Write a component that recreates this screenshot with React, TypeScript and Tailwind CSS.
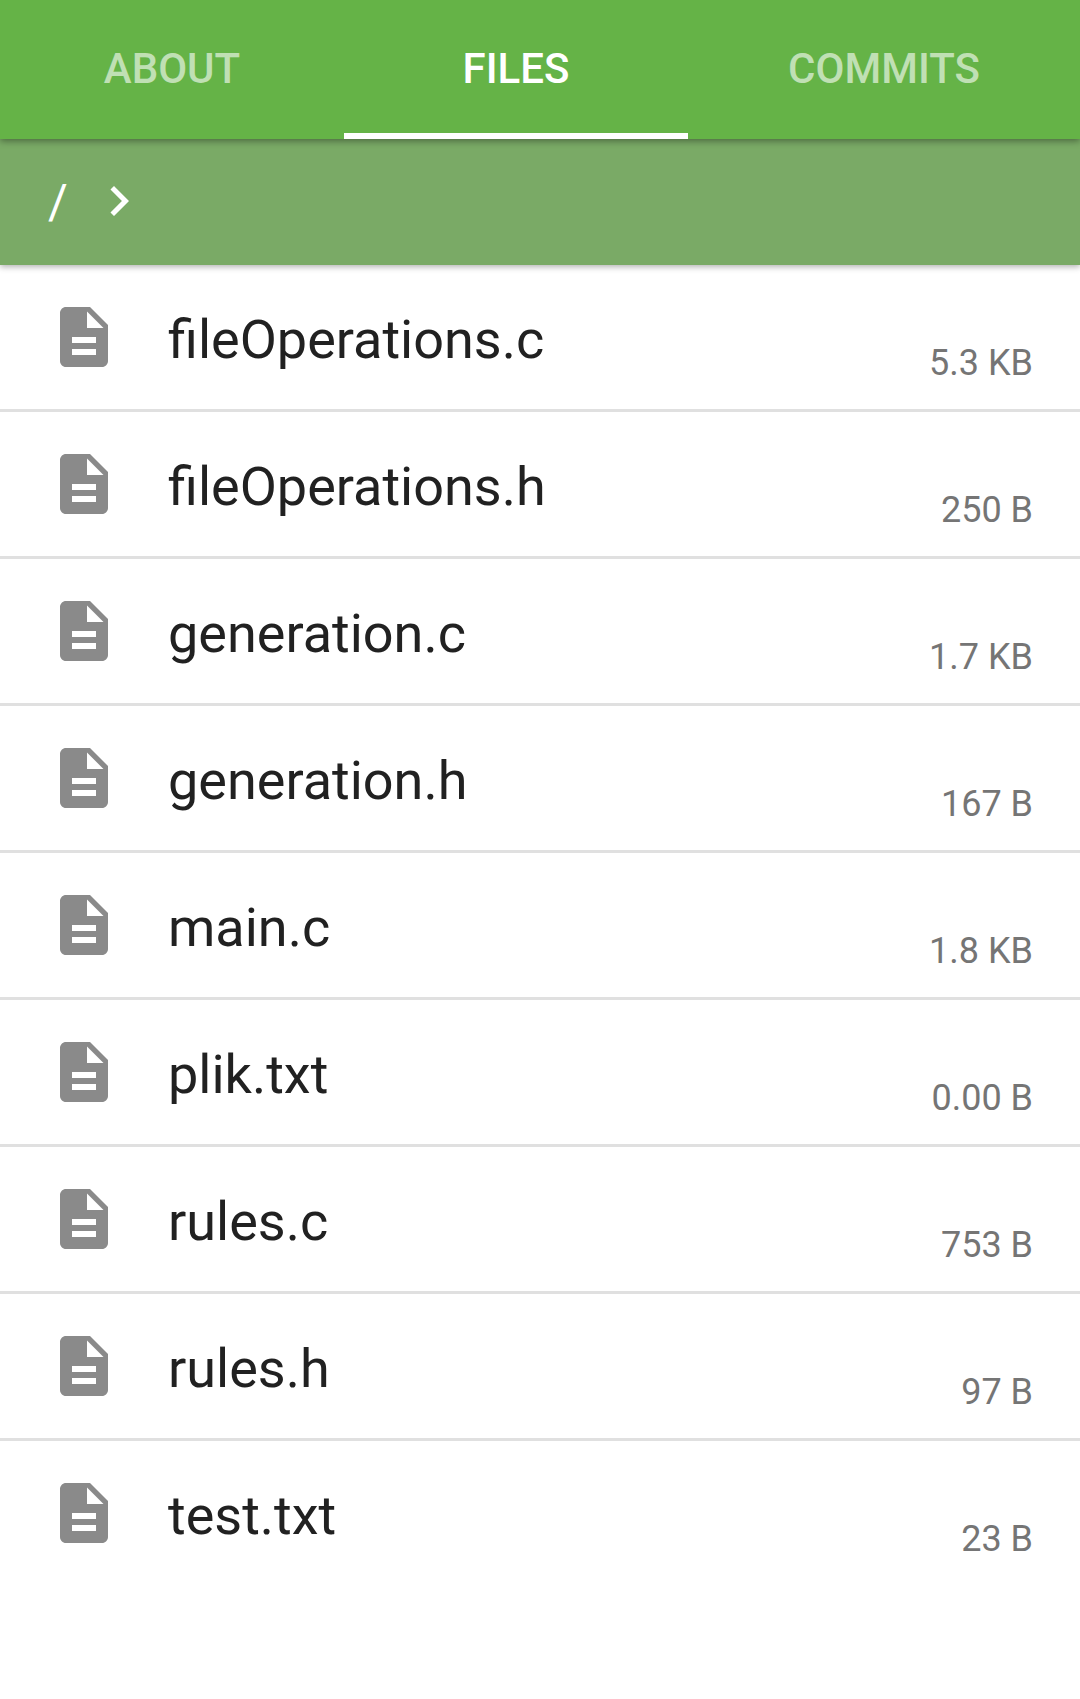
const files: [string, string][] = [
  ["fileOperations.c", "5.3 KB"],
  ["fileOperations.h", "250 B"],
  ["generation.c", "1.7 KB"],
  ["generation.h", "167 B"],
  ["main.c", "1.8 KB"],
  ["plik.txt", "0.00 B"],
  ["rules.c", "753 B"],
  ["rules.h", "97 B"],
  ["test.txt", "23 B"],
];

function FileIcon() {
  return (
    <svg viewBox="0 0 24 24" className="w-[72px] h-[72px] shrink-0" fill="#8a8a8a">
      <path d="M14 2H6c-1.1 0-2 .9-2 2v16c0 1.1.9 2 2 2h12c1.1 0 2-.9 2-2V8l-6-6zm2 16H8v-2h8v2zm0-4H8v-2h8v2zm-3-5V3.5L18.5 9H13z" />
    </svg>
  );
}

function Row({ name, size, last }: { name: string; size: string; last: boolean }) {
  return (
    <div className={`flex h-[147px] pl-[48px] pr-[47px] ${last ? "" : "border-b-[3px] border-[#e0e0e0]"}`}>
      <div className="pt-[36px]">
        <FileIcon />
      </div>
      <div className="ml-[48px] pt-[43px] text-[54px] leading-[64px] text-[#212121]">{name}</div>
      <div className="ml-auto pt-[76px] text-[36px] leading-[44px] text-[#757575]">{size}</div>
    </div>
  );
}

export default function App() {
  return (
    <div className="w-[1080px] h-[1699px] bg-white overflow-hidden font-['Roboto',sans-serif]">
      <div className="relative z-20 flex h-[139px] bg-[#65b347] text-[42px] font-medium leading-[50px] shadow-[0_2px_7px_rgba(0,0,0,0.4)]">
        <div className="w-[344px] flex items-center justify-center pb-[2px] text-white/60">ABOUT</div>
        <div className="w-[344px] flex items-center justify-center pb-[2px] text-white border-b-[6px] border-white pt-[6px]">FILES</div>
        <div className="flex-1 flex items-center justify-center pb-[2px] text-white/60">COMMITS</div>
      </div>
      <div className="relative z-10 flex items-center h-[126px] bg-[#7aaa66] shadow-[0_2px_6px_rgba(0,0,0,0.3)] text-white">
        <span className="ml-[48px] text-[48px] leading-[56px]">/</span>
        <svg viewBox="0 0 24 24" className="ml-[21px] mb-[2px] w-[60px] h-[60px]" fill="#ffffff">
          <path d="M10 6L8.59 7.41 13.17 12l-4.58 4.59L10 18l6-6z" />
        </svg>
      </div>
      <div>
        {files.map(([name, size], i) => (
          <Row key={name} name={name} size={size} last={i === files.length - 1} />
        ))}
      </div>
    </div>
  );
}
